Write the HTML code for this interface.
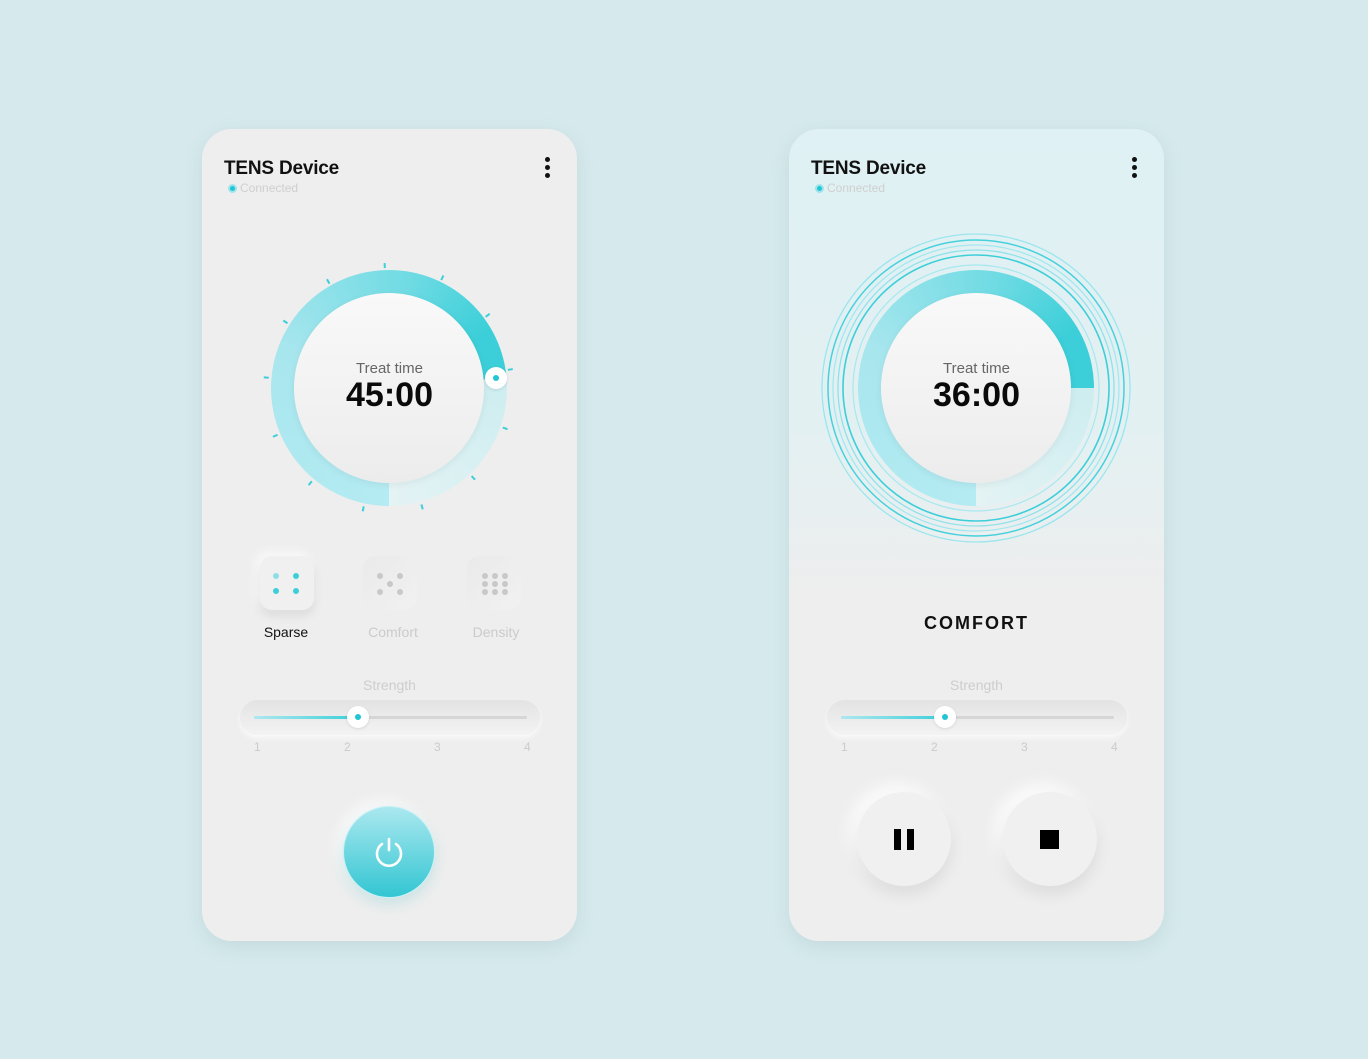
<!DOCTYPE html>
<html><head><meta charset="utf-8"><style>
*{margin:0;padding:0;box-sizing:border-box}
body{width:1368px;height:1059px;background:#d6eaed;font-family:"Liberation Sans",sans-serif;position:relative;overflow:hidden}
.card{position:absolute;top:129px;width:375px;height:812px;border-radius:30px;background:#eeeeee;box-shadow:0 6px 18px rgba(120,150,155,0.18)}
.a{position:absolute}
.title{left:22px;top:29px;font-size:19px;font-weight:bold;color:#111;letter-spacing:-0.2px}
.conn{left:38px;top:52px;font-size:12px;color:#cfcfcf}
.cdot{left:26px;top:55px;width:9px;height:9px;border-radius:50%;background:#22c5d3;border:2px solid #9ee4ea}
.md{width:5px;height:5px;border-radius:50%;background:#111;left:343px}
.ring{width:236px;height:236px;border-radius:50%;left:69px;top:141px}
.disc{width:190px;height:190px;border-radius:50%;left:92px;top:164px;background:linear-gradient(#f9f9f9,#ececec);box-shadow:0 2px 8px rgba(0,0,0,0.06)}
.tt{width:375px;left:0;top:231px;text-align:center;font-size:15px;color:#666}
.big{width:375px;left:0;top:247px;text-align:center;font-size:34px;font-weight:bold;color:#0a0a0a}
.tick{left:186px;top:257px;width:1.6px;height:5px;background:#3ccfd9}
.box{width:54px;height:54px;border-radius:12px;top:427px;background:linear-gradient(135deg,#eaeaea,#f1f1f1)}
.box.on{background:#f0f0f0;box-shadow:0 6px 10px rgba(0,0,0,0.08),-4px -4px 10px #fafafa}
.d{position:absolute;width:6px;height:6px;border-radius:50%;background:#c8c8c8}
.lbl{top:495px;font-size:14px;color:#cbcbcb;width:100px;text-align:center}
.str{width:375px;left:0;top:548px;text-align:center;font-size:14px;color:#cdcdcd}
.pill{left:38px;top:571px;width:300px;height:35px;border-radius:18px;background:linear-gradient(#e3e3e3,#f3f3f3);box-shadow:0 3px 6px rgba(255,255,255,0.7)}
.line{left:52px;top:587px;width:273px;height:3px;border-radius:2px;background:#d6d6d6}
.fill{left:52px;top:587px;width:103px;height:3px;border-radius:2px;background:linear-gradient(90deg,#aee8ef,#3ccfd9)}
.knob{width:22px;height:22px;border-radius:50%;background:#fff;box-shadow:0 1px 3px rgba(0,0,0,0.1)}
.knob:after{content:"";position:absolute;left:8px;top:8px;width:6px;height:6px;border-radius:50%;background:#22c5d3}
.num{top:611px;font-size:12px;color:#cbcbcb}
</style></head><body>

<!-- LEFT CARD -->
<div class="card" style="left:202px">
<div class="a title">TENS Device</div>
<div class="a cdot"></div><div class="a conn">Connected</div>
<div class="a md" style="top:28px"></div><div class="a md" style="top:36px"></div><div class="a md" style="top:44px"></div>

<div class="a ring" style="background:conic-gradient(from 180deg,#b5ebf2 0deg,#a8e6ee 110deg,#70dbe3 190deg,#3ccfd9 240deg,#3ccfd9 265deg,#cdedf0 265deg,#e4f3f4 360deg)"></div>
<div class="a disc"></div>
<div class="a tt">Treat time</div>
<div class="a big">45:00</div>
<div class="a knob" style="left:283px;top:238px"></div>

<div class="a tick" style="transform:rotate(-2deg) translateY(-123px)"></div>
<div class="a tick" style="transform:rotate(25.7deg) translateY(-123px)"></div>
<div class="a tick" style="transform:rotate(53.4deg) translateY(-123px)"></div>
<div class="a tick" style="transform:rotate(81deg) translateY(-123px)"></div>
<div class="a tick" style="transform:rotate(108.8deg) translateY(-123px)"></div>
<div class="a tick" style="transform:rotate(136.5deg) translateY(-123px)"></div>
<div class="a tick" style="transform:rotate(164.2deg) translateY(-123px)"></div>
<div class="a tick" style="transform:rotate(191.9deg) translateY(-123px)"></div>
<div class="a tick" style="transform:rotate(219.6deg) translateY(-123px)"></div>
<div class="a tick" style="transform:rotate(247.3deg) translateY(-123px)"></div>
<div class="a tick" style="transform:rotate(275deg) translateY(-123px)"></div>
<div class="a tick" style="transform:rotate(302.7deg) translateY(-123px)"></div>
<div class="a tick" style="transform:rotate(330.4deg) translateY(-123px)"></div>

<div class="a box on" style="left:58px">
<div class="d" style="left:13px;top:17px;background:#8fdde5"></div><div class="d" style="left:33px;top:17px;background:#3ccfd9"></div>
<div class="d" style="left:13px;top:32px;background:#3ccfd9"></div><div class="d" style="left:33px;top:32px;background:#3ccfd9"></div>
</div>
<div class="a box" style="left:161px">
<div class="d" style="left:14px;top:17px"></div><div class="d" style="left:34px;top:17px"></div>
<div class="d" style="left:24px;top:25px"></div>
<div class="d" style="left:14px;top:33px"></div><div class="d" style="left:34px;top:33px"></div>
</div>
<div class="a box" style="left:265px">
<div class="d" style="left:15px;top:17px"></div><div class="d" style="left:25px;top:17px"></div><div class="d" style="left:35px;top:17px"></div>
<div class="d" style="left:15px;top:25px"></div><div class="d" style="left:25px;top:25px"></div><div class="d" style="left:35px;top:25px"></div>
<div class="d" style="left:15px;top:33px"></div><div class="d" style="left:25px;top:33px"></div><div class="d" style="left:35px;top:33px"></div>
</div>
<div class="a lbl" style="left:34px;color:#111">Sparse</div>
<div class="a lbl" style="left:141px">Comfort</div>
<div class="a lbl" style="left:244px">Density</div>

<div class="a str">Strength</div>
<div class="a pill"></div>
<div class="a line"></div><div class="a fill"></div>
<div class="a knob" style="left:145px;top:577px"></div>
<div class="a num" style="left:52px">1</div><div class="a num" style="left:142px">2</div><div class="a num" style="left:232px">3</div><div class="a num" style="left:322px">4</div>

<div class="a" style="left:141px;top:677px;width:92px;height:92px;border-radius:50%;background:linear-gradient(#abe8ef,#32c6d2);border:1px solid #c7f1f5;box-shadow:0 6px 14px rgba(50,180,190,0.2),-6px -6px 14px rgba(255,255,255,0.7)">
<svg width="92" height="92" viewBox="0 0 92 92" style="position:absolute;left:-1px;top:-1px"><path d="M39 38 A12 12 0 1 0 53 38" fill="none" stroke="#fff" stroke-width="2.6" stroke-linecap="round"/><line x1="46" y1="33" x2="46" y2="44" stroke="#fff" stroke-width="2.6" stroke-linecap="round"/></svg>
</div>
</div>

<!-- RIGHT CARD -->
<div class="card" style="left:789px;background:linear-gradient(#dff1f4 0px,#e3f0f2 300px,#eeeeee 470px)">
<div class="a title">TENS Device</div>
<div class="a cdot"></div><div class="a conn">Connected</div>
<div class="a md" style="top:28px"></div><div class="a md" style="top:36px"></div><div class="a md" style="top:44px"></div>

<svg class="a" style="left:0;top:72px" width="375" height="375" viewBox="0 0 375 375">
<g fill="none" transform="translate(187,187)">
<circle r="154" stroke="#9ae6ee" stroke-width="1.3"/>
<circle r="148" stroke="#45d1dc" stroke-width="1.5"/>
<circle r="143" stroke="#a4e8ef" stroke-width="1.3"/>
<circle r="138" stroke="#8fe2ea" stroke-width="1.3"/>
<circle r="133" stroke="#3ccfd9" stroke-width="1.6"/>
<circle r="123" stroke="#a8e8ef" stroke-width="1.2"/>
</g></svg>
<div class="a ring" style="background:conic-gradient(from 180deg,#b5ebf2 0deg,#a8e6ee 110deg,#70dbe3 190deg,#3ccfd9 240deg,#3ccfd9 270deg,#cdedf0 270deg,#e4f3f4 360deg)"></div>
<div class="a disc"></div>
<div class="a tt">Treat time</div>
<div class="a big">36:00</div>

<div class="a" style="left:0;width:375px;top:484px;text-align:center;font-size:18px;font-weight:bold;letter-spacing:2px;color:#111">COMFORT</div>

<div class="a str">Strength</div>
<div class="a pill"></div>
<div class="a line"></div><div class="a fill"></div>
<div class="a knob" style="left:145px;top:577px"></div>
<div class="a num" style="left:52px">1</div><div class="a num" style="left:142px">2</div><div class="a num" style="left:232px">3</div><div class="a num" style="left:322px">4</div>

<div class="a" style="left:68px;top:663px;width:94px;height:94px;border-radius:50%;background:#f0f0f0;box-shadow:0 8px 16px rgba(0,0,0,0.08),-8px -8px 16px rgba(255,255,255,0.8)">
<div class="a" style="left:37px;top:37px;width:7px;height:21px;background:#000"></div>
<div class="a" style="left:50px;top:37px;width:7px;height:21px;background:#000"></div>
</div>
<div class="a" style="left:214px;top:663px;width:94px;height:94px;border-radius:50%;background:#f0f0f0;box-shadow:0 8px 16px rgba(0,0,0,0.08),-8px -8px 16px rgba(255,255,255,0.8)">
<div class="a" style="left:37px;top:38px;width:19px;height:19px;background:#000"></div>
</div>
</div>
</body></html>
